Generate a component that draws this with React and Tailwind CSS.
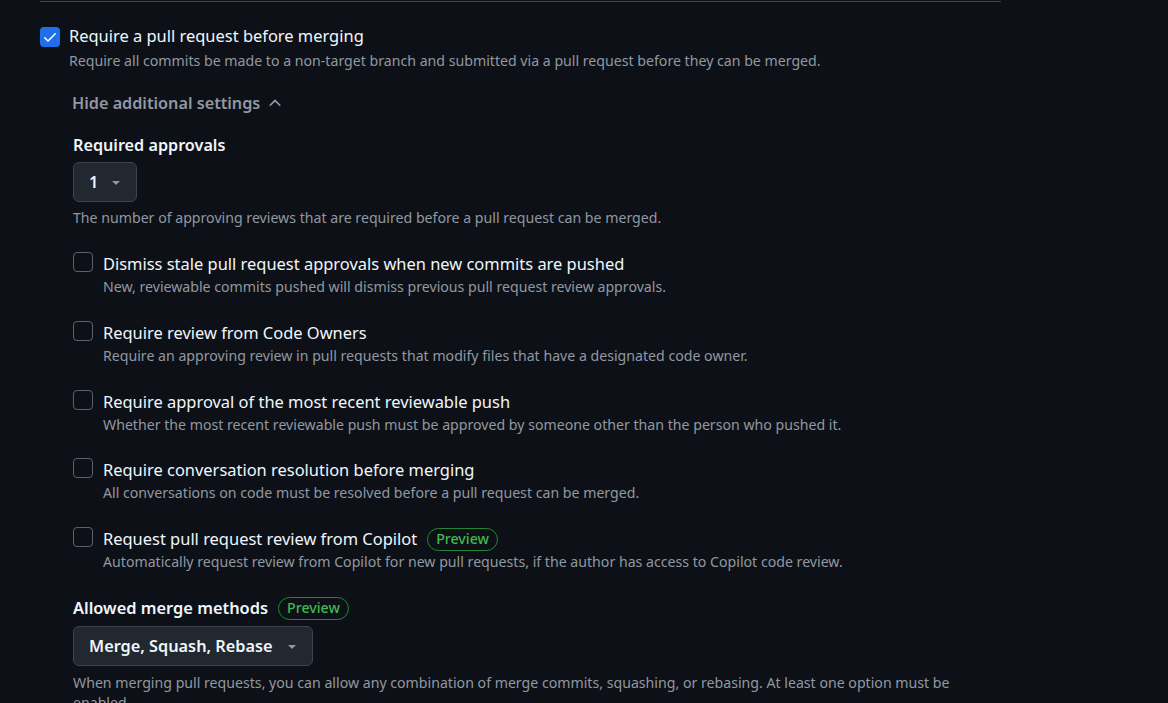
import React from "react";

const font = { fontFamily: '"Noto Sans", "Open Sans", sans-serif' };

function Caret() {
  return (
    <svg width="16" height="16" viewBox="0 0 16 16" fill="#9198a1">
      <path d="m4.427 7.427 3.396 3.396a.25.25 0 0 0 .354 0l3.396-3.396A.25.25 0 0 0 11.396 7H4.604a.25.25 0 0 0-.177.427Z" />
    </svg>
  );
}

function ChevronUp() {
  return (
    <svg width="18" height="18" viewBox="0 0 16 16" fill="#9198a1">
      <path d="M3.22 10.53a.749.749 0 0 1 0-1.06l4.25-4.25a.749.749 0 0 1 1.06 0l4.25 4.25a.749.749 0 0 1-1.042 1.08L8 6.811 4.28 10.53a.749.749 0 0 1-1.06 0Z" />
    </svg>
  );
}

function Badge() {
  return (
    <span className="inline-flex h-[23px] items-center rounded-full border border-[#238636] px-[8px] text-[14.2px] font-medium leading-none text-[#3fb950]">
      Preview
    </span>
  );
}

function Row({ title, desc, badge }) {
  return (
    <div className="flex gap-[10px]">
      <div className="h-[20px] w-[20px] shrink-0 rounded-[4px] border border-[#5a626c] bg-[#0d1117]" />
      <div className="flex flex-col">
        <div className="flex h-[24px] items-center gap-[10px]">
          <span className="text-[16.45px] leading-[24px] text-[#f0f6fc]">{title}</span>
          {badge && <Badge />}
        </div>
        <div className="mt-[1px] text-[14.15px] leading-[20px] text-[#9198a1]">{desc}</div>
      </div>
    </div>
  );
}

export default function App() {
  return (
    <div className="h-[703px] w-[1168px] overflow-hidden bg-[#0d1117] pl-[40px]" style={font}>
      <div className="mt-[1px] h-px w-[961px] bg-[#3d444d]" />
      <div className="w-[961px]">
        <div className="mt-[22px] flex gap-[9px]">
          <div className="mt-[3px] flex h-[20px] w-[20px] shrink-0 items-center justify-center rounded-[4px] bg-[#1f6feb]">
            <svg width="16" height="16" viewBox="0 0 16 16" fill="#ffffff">
              <path d="M13.78 4.22a.75.75 0 0 1 0 1.06l-7.25 7.25a.75.75 0 0 1-1.06 0L2.22 9.28a.751.751 0 0 1 .018-1.042.751.751 0 0 1 1.042-.018L6 10.94l6.72-6.72a.75.75 0 0 1 1.06 0Z" />
            </svg>
          </div>
          <div className="flex flex-col">
            <span className="text-[16.45px] leading-[24px] text-[#f0f6fc]">Require a pull request before merging</span>
            <span className="mt-[3px] text-[14.15px] leading-[20px] text-[#9198a1]">
              Require all commits be made to a non-target branch and submitted via a pull request before they can be merged.
            </span>
          </div>
        </div>

        <div className="pl-[33px]">
          <div className="mt-[20px] -ml-[1px] flex h-[24px] items-center gap-[6px]">
            <span className="text-[16.2px] font-semibold leading-[24px] text-[#9198a1]">Hide additional settings</span>
            <ChevronUp />
          </div>

          <div className="mt-[18px] text-[16.2px] font-semibold leading-[24px] text-[#f0f6fc]">Required approvals</div>
          <div className="mt-[5px] flex h-[40px] w-[64px] items-center gap-[10px] rounded-[6px] border border-[#3d444d] bg-[#212830] pl-[15px]">
            <span className="text-[16.3px] font-semibold text-[#f0f6fc]">1</span>
            <Caret />
          </div>
          <div className="mt-[6px] text-[14.15px] leading-[20px] text-[#9198a1]">
            The number of approving reviews that are required before a pull request can be merged.
          </div>

          <div className="mt-[24px] flex flex-col gap-[23.75px]">
            <Row
              title="Dismiss stale pull request approvals when new commits are pushed"
              desc="New, reviewable commits pushed will dismiss previous pull request review approvals."
            />
            <Row
              title="Require review from Code Owners"
              desc="Require an approving review in pull requests that modify files that have a designated code owner."
            />
            <Row
              title="Require approval of the most recent reviewable push"
              desc="Whether the most recent reviewable push must be approved by someone other than the person who pushed it."
            />
            <Row
              title="Require conversation resolution before merging"
              desc="All conversations on code must be resolved before a pull request can be merged."
            />
            <Row
              title="Request pull request review from Copilot"
              desc="Automatically request review from Copilot for new pull requests, if the author has access to Copilot code review."
              badge
            />
          </div>

          <div className="mt-[24px] flex h-[24px] items-center gap-[10px]">
            <span className="text-[16.4px] font-semibold leading-[24px] text-[#f0f6fc]">Allowed merge methods</span>
            <Badge />
          </div>
          <div className="mt-[6px] flex h-[40px] w-[240px] items-center justify-between rounded-[6px] border border-[#3d444d] bg-[#212830] pl-[15px] pr-[12px]">
            <span className="text-[16.3px] font-semibold text-[#f0f6fc]">Merge, Squash, Rebase</span>
            <Caret />
          </div>
          <div className="mt-[7px] text-[14.15px] leading-[20px] text-[#9198a1]">
            When merging pull requests, you can allow any combination of merge commits, squashing, or rebasing. At least one option must be enabled.
          </div>
        </div>
      </div>
    </div>
  );
}
